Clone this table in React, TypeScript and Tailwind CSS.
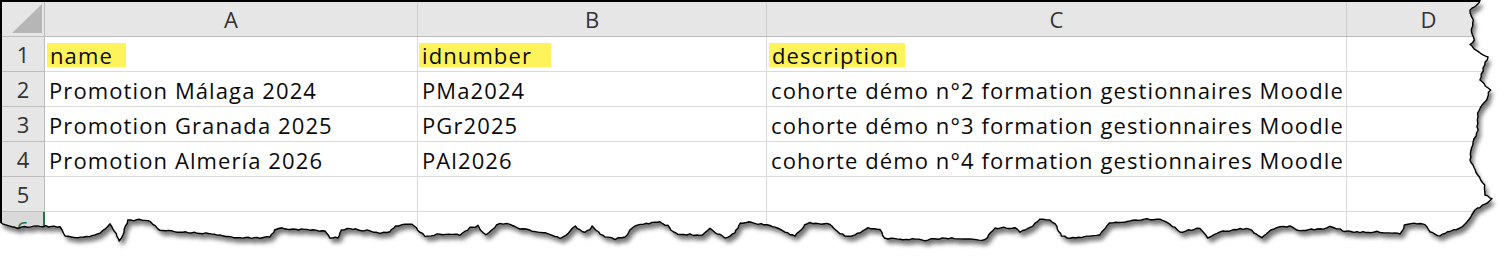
import React from 'react'

// the grid of the sheet, columns in px (row header, A, B, C, D)
const cols = ['w-[43px]', 'w-[373px]', 'w-[349px]', 'w-[580px]', 'w-[164px]']

const rows: { n: number; cells: string[] }[] = [
  { n: 2, cells: ['Promotion Málaga 2024', 'PMa2024', 'cohorte démo n°2 formation gestionnaires Moodle', ''] },
  { n: 3, cells: ['Promotion Granada 2025', 'PGr2025', 'cohorte démo n°3 formation gestionnaires Moodle', ''] },
  { n: 4, cells: ['Promotion Almería 2026', 'PAl2026', 'cohorte démo n°4 formation gestionnaires Moodle', ''] },
  { n: 5, cells: ['', '', '', ''] },
]

// torn paper edge, right side then bottom (right to left)
const edge: [number, number][] = [
  [1481, 0], [1476, 5], [1470, 10], [1473, 20], [1471, 32], [1475, 40], [1470, 45], [1478, 52],
  [1488, 57], [1484, 65], [1480, 80], [1490, 90], [1486, 100], [1479, 110], [1477, 120],
  [1478, 130], [1472, 145], [1470, 160], [1478, 175], [1484, 185], [1485, 195], [1492, 199],
  [1487, 203], [1480, 207], [1475, 210], [1472, 215], [1465, 224], [1460, 228], [1450, 231],
  [1440, 236], [1435, 234], [1430, 232], [1425, 224], [1420, 223], [1405, 225], [1400, 234],
  [1395, 233], [1380, 232], [1360, 232], [1345, 231], [1340, 229], [1330, 227], [1320, 229],
  [1300, 230], [1295, 229], [1290, 226], [1280, 227], [1270, 230], [1262, 238], [1258, 236],
  [1250, 229], [1240, 229], [1220, 232], [1208, 238], [1200, 228], [1180, 232], [1170, 224],
  [1160, 219], [1150, 219], [1130, 221], [1110, 223], [1100, 234], [1090, 236], [1070, 238],
  [1062, 236], [1055, 224], [1050, 220], [1040, 219], [1030, 228], [1020, 232], [1015, 228],
  [995, 228], [985, 240], [970, 239], [945, 238], [925, 240], [900, 239], [885, 238],
  [880, 230], [868, 228], [855, 235], [845, 236], [835, 230], [830, 224], [810, 223],
  [805, 225], [795, 236], [785, 232], [770, 225], [758, 224], [745, 222], [740, 223],
  [735, 233], [725, 238], [710, 229], [700, 236], [690, 234], [680, 235], [673, 232],
  [668, 226], [660, 222], [655, 223], [640, 224], [632, 228], [625, 237], [615, 239],
  [605, 237], [598, 232], [592, 226], [590, 229], [585, 233], [580, 230], [575, 226],
  [568, 233], [560, 239], [555, 236], [545, 233], [535, 231], [520, 229], [510, 224],
  [500, 223], [497, 225], [492, 230], [486, 234], [480, 230], [478, 226], [470, 228],
  [465, 232], [460, 235], [440, 234], [425, 236], [420, 232], [412, 224], [405, 224],
  [395, 226], [390, 232], [380, 233], [370, 231], [350, 229], [342, 230], [338, 238],
  [330, 238], [325, 231], [310, 230], [290, 229], [282, 228], [275, 230], [270, 237],
  [260, 238], [237, 238], [220, 235], [200, 233], [180, 232], [160, 230], [148, 220],
  [128, 220], [120, 241], [110, 224], [100, 233], [95, 235], [75, 238], [65, 236],
  [60, 227], [40, 226], [15, 228], [5, 225], [0, 222],
]

function roughen(pts: [number, number][]) {
  const out: [number, number][] = []
  for (let i = 0; i < pts.length - 1; i++) {
    const [x1, y1] = pts[i]
    const [x2, y2] = pts[i + 1]
    const steps = Math.max(1, Math.round(Math.hypot(x2 - x1, y2 - y1) / 3))
    for (let s = 0; s < steps; s++) {
      const t = s / steps
      const j = Math.sin((i * 13 + s) * 12.9898) * 43758.5453
      const n = (j - Math.floor(j) - 0.5) * 1.6
      const horiz = Math.abs(x2 - x1) > Math.abs(y2 - y1)
      out.push([x1 + (x2 - x1) * t + (horiz ? 0 : n), y1 + (y2 - y1) * t + (horiz ? n : 0)])
    }
  }
  out.push(pts[pts.length - 1])
  return out
}

const tornPts = roughen(edge)
const tornLine = 'M' + tornPts.map(([x, y]) => `${x.toFixed(1)},${y.toFixed(1)}`).join(' L')
const pagePath = 'M0,0 ' + tornLine.replace('M', 'L') + ' Z'

function Hl({ children, w }: { children: React.ReactNode; w: string }) {
  return (
    <span className={`inline-flex items-center h-[24px] bg-[#fff35c] pl-[3px] ${w}`}>{children}</span>
  )
}

export default function App() {
  return (
    <div
      className="relative w-[1511px] h-[261px] bg-white overflow-hidden text-[#0a0a0a]"
      style={{ fontFamily: '"Open Sans", "Liberation Sans", sans-serif' }}
    >
      <div className="border-l-2 border-t-2 border-black w-[1511px]">
        {/* column headers */}
        <div className="flex h-[35px] bg-[#e6e6e6] border-b border-[#bdbdbd] text-[22px] text-[#333]">
          <div className={`${cols[0]} relative border-r border-[#bdbdbd]`}>
            <svg className="absolute right-[2px] bottom-[3px]" width="30" height="29">
              <polygon points="30,0 30,29 0,29" fill="#b6b6b6" />
            </svg>
          </div>
          {['A', 'B', 'C', 'D'].map((l, i) => (
            <div key={l} className={`${cols[i + 1]} flex items-center justify-center border-r border-[#cfcfcf]`}>
              {l}
            </div>
          ))}
        </div>

        {/* row 1 with highlighted headers */}
        <div className="flex h-[35px] text-[22px] tracking-[1.1px]">
          <div className={`${cols[0]} flex items-center justify-center bg-[#e6e6e6] border-r border-b border-[#bdbdbd] text-[#333] tracking-normal`}>1</div>
          <div className={`${cols[1]} flex items-center pl-[2px] pt-[2px] border-r border-b border-[#dadada]`}>
            <Hl w="w-[79px]">name</Hl>
          </div>
          <div className={`${cols[2]} flex items-center pl-[1px] pt-[2px] border-r border-b border-[#dadada]`}>
            <Hl w="w-[132px]">idnumber</Hl>
          </div>
          <div className={`${cols[3]} flex items-center pl-[2px] pt-[2px] border-r border-b border-[#dadada]`}>
            <Hl w="w-[136px]">description</Hl>
          </div>
          <div className={`${cols[4]} border-r border-b border-[#dadada]`} />
        </div>

        {rows.map((r) => (
          <div key={r.n} className="flex h-[35px] text-[22px]">
            <div className={`${cols[0]} flex items-center justify-center bg-[#e6e6e6] border-r border-b border-[#bdbdbd] text-[#333]`}>
              {r.n}
            </div>
            {r.cells.map((c, i) => (
              <div key={i} className={`${cols[i + 1]} flex items-center pl-[4px] pt-[2px] border-r border-b border-[#dadada] whitespace-nowrap tracking-[1.1px]`}>
                {c}
              </div>
            ))}
          </div>
        ))}

        {/* row 6, partly torn away */}
        <div className="flex h-[35px] text-[22px]">
          <div className={`${cols[0]} flex items-center justify-center bg-[#d9d9d9] border-r-2 border-[#217346] text-[#217346]`}>6</div>
          {[1, 2, 3, 4].map((i) => (
            <div key={i} className={`${cols[i]} border-r border-[#dadada]`} />
          ))}
        </div>
      </div>

      {/* torn edge with its shadow */}
      <svg className="absolute inset-0 pointer-events-none" width="1511" height="261">
        <defs>
          <clipPath id="outside">
            <path d={`M0,0 H1511 V261 H0 Z ${pagePath}`} clipRule="evenodd" />
          </clipPath>
          <filter id="blur" x="-5%" y="-20%" width="110%" height="140%">
            <feGaussianBlur stdDeviation="2.2" />
          </filter>
        </defs>
        <g clipPath="url(#outside)">
          <rect width="1511" height="261" fill="#fff" />
          <path d={pagePath} transform="translate(3,5)" fill="#4a4a4a" opacity="0.75" filter="url(#blur)" />
        </g>
        <path d={tornLine} fill="none" stroke="#000" strokeWidth="1.4" strokeLinejoin="round" />
      </svg>
    </div>
  )
}
